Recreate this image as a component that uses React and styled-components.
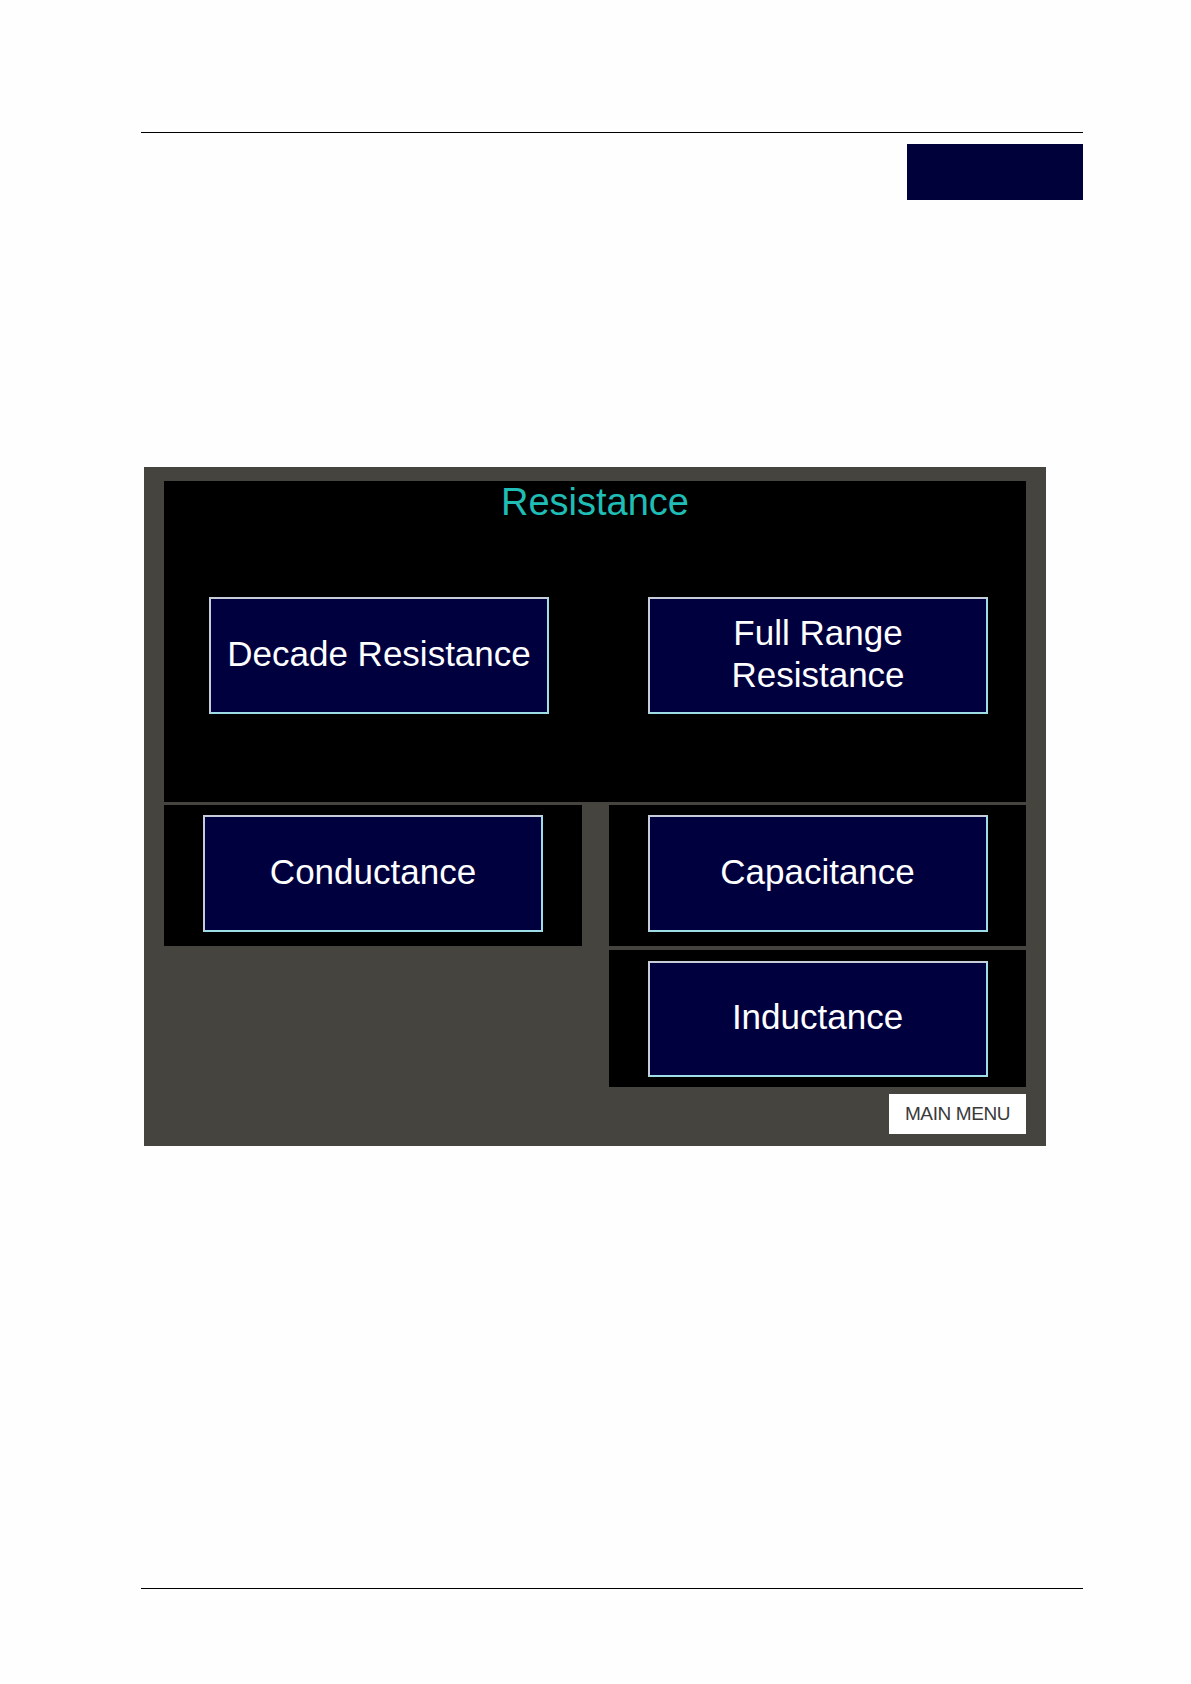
import React from "react";
import styled, { createGlobalStyle } from "styled-components";

const Global = createGlobalStyle`
  html, body { margin: 0; padding: 0; background: #fefefe; }
  body { font-family: "Liberation Sans", Arial, sans-serif; }
`;

const Page = styled.div`
  width: 942px;
  padding-left: 141px;
  padding-top: 132px;
  padding-bottom: 95px;
`;

const Rule = styled.div`
  height: 1px;
  background: #000;
  margin-top: ${(p) => p.$top || 0}px;
`;

const HeaderRow = styled.div`
  display: flex;
  justify-content: flex-end;
  margin-top: 11px;
`;

const HeaderTab = styled.div`
  width: 176px;
  height: 56px;
  background: #00003a;
`;

const Panel = styled.div`
  margin-top: 267px;
  margin-left: 3px;
  width: 902px;
  height: 679px;
  box-sizing: border-box;
  background: #46443f;
  padding: 14px 20px 12px 20px;
  display: flex;
  flex-direction: column;
`;

const TopSection = styled.div`
  height: 321px;
  box-sizing: border-box;
  background: #000;
  padding-top: 1px;
  display: flex;
  flex-direction: column;
`;

const Title = styled.div`
  text-align: center;
  color: #1fbdb5;
  font-size: 38px;
  line-height: 41px;
`;

const TopButtons = styled.div`
  display: flex;
  gap: 99px;
  padding-left: 45px;
  margin-top: 74px;
`;

const Lower = styled.div`
  margin-top: 3px;
  display: grid;
  grid-template-columns: 418px 417px;
  column-gap: 27px;
  align-items: start;
`;

const Column = styled.div`
  display: flex;
  flex-direction: column;
  gap: 4px;
`;

const Section = styled.div`
  background: #000;
  height: ${(p) => p.$h}px;
  box-sizing: border-box;
  padding-top: ${(p) => p.$pt}px;
  display: flex;
  justify-content: center;
  align-items: flex-start;
`;

const NavButton = styled.div`
  width: 340px;
  height: ${(p) => p.$h || 117}px;
  box-sizing: border-box;
  background: #00003f;
  border: 2px solid #c6ccd8;
  border-right-color: #9fdde6;
  border-bottom-color: #9fdde6;
  padding-bottom: 4px;
  display: flex;
  align-items: center;
  justify-content: center;
  text-align: center;
  color: #ffffff;
  font-size: 35px;
  line-height: 42px;
`;

const MenuRow = styled.div`
  display: flex;
  justify-content: flex-end;
  margin-top: 3px;
`;

const MenuButton = styled.div`
  width: 137px;
  height: 40px;
  background: #ffffff;
  color: #3a3a3a;
  font-size: 19px;
  letter-spacing: -0.4px;
  display: flex;
  align-items: center;
  justify-content: center;
`;

export default function App() {
  return (
    <>
      <Global />
      <Page>
        <Rule />
        <HeaderRow>
          <HeaderTab />
        </HeaderRow>
        <Panel>
          <TopSection>
            <Title>Resistance</Title>
            <TopButtons>
              <NavButton>Decade Resistance</NavButton>
              <NavButton>
                Full Range
                <br />
                Resistance
              </NavButton>
            </TopButtons>
          </TopSection>
          <Lower>
            <Column>
              <Section $h={141} $pt={10}>
                <NavButton>Conductance</NavButton>
              </Section>
            </Column>
            <Column>
              <Section $h={141} $pt={10}>
                <NavButton>Capacitance</NavButton>
              </Section>
              <Section $h={137} $pt={11}>
                <NavButton $h={116}>Inductance</NavButton>
              </Section>
              <MenuRow>
                <MenuButton>MAIN MENU</MenuButton>
              </MenuRow>
            </Column>
          </Lower>
        </Panel>
        <Rule $top={442} />
      </Page>
    </>
  );
}
